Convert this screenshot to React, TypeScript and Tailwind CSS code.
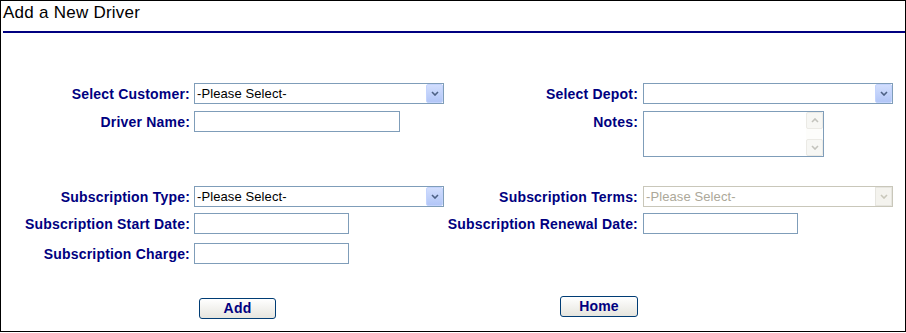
import React from "react";

const label = "h-[21px] pt-[1px] text-right text-[14px] leading-[21px] font-bold tracking-[0.2px] text-[#000080] whitespace-nowrap";

function Chevron({ color, up = false }: { color: string; up?: boolean }) {
  return (
    <svg width="8" height="5" viewBox="0 0 8 5" className={up ? "rotate-180" : ""}>
      <path d="M1 1 L4 4 L7 1" fill="none" stroke={color} strokeWidth="1.6" />
    </svg>
  );
}

function FakeSelect({ value, disabled = false }: { value?: string; disabled?: boolean }) {
  return (
    <div
      className={
        "flex h-[21px] w-[250px] border " +
        (disabled ? "border-[#c9c7ba] bg-white" : "border-[#7f9db9] bg-white")
      }
    >
      <span
        className={
          "flex-1 pl-[2px] text-[13px] leading-[19px] tracking-[0.1px] " + (disabled ? "text-[#aca899]" : "text-black")
        }
      >
        {value}
      </span>
      {disabled ? (
        <div className="flex w-[17px] items-center justify-center border border-[#e6e5df] bg-[#f4f3ee]">
          <Chevron color="#c9c7ba" />
        </div>
      ) : (
        <div className="flex w-[17px] items-center justify-center rounded-[2px] border border-[#c3d3fd] bg-gradient-to-b from-[#d2defd] to-[#b2c6f7]">
          <Chevron color="#4d6185" />
        </div>
      )}
    </div>
  );
}

function TextBox({ width }: { width: string }) {
  return <input type="text" className={"h-[21px] border border-[#7f9db9] bg-white px-[2px] text-[13px] outline-none " + width} />;
}

function Notes() {
  return (
    <div className="flex h-[46px] w-[181px] border border-[#7f9db9] bg-white">
      <textarea className="flex-1 resize-none overflow-hidden px-[2px] text-[13px] outline-none" />
      <div className="flex w-[17px] flex-col bg-[#fdfdfb]">
        <div className="flex h-[17px] items-center justify-center rounded-[2px] border border-[#ebeae5] bg-[#f7f7f4]">
          <Chevron color="#c3c3bd" up />
        </div>
        <div className="flex-1" />
        <div className="flex h-[17px] items-center justify-center rounded-[2px] border border-[#ebeae5] bg-[#f7f7f4]">
          <Chevron color="#c3c3bd" />
        </div>
      </div>
    </div>
  );
}

function Row({ className, children }: { className: string; children: React.ReactNode }) {
  return <div className={"grid grid-cols-[193px_253px_196px_1fr] items-start " + className}>{children}</div>;
}

function XpButton({ children, width }: { children: React.ReactNode; width: string }) {
  return (
    <button
      className={
        "h-[21px] rounded-[3px] border border-[#003c74] bg-gradient-to-b from-white to-[#e6e5de] text-[14px] leading-[19px] font-bold tracking-[0.2px] text-[#000080] " +
        width
      }
    >
      {children}
    </button>
  );
}

export default function App() {
  return (
    <div className="h-[332px] w-[906px] border border-black bg-white font-['Liberation_Sans',Arial,sans-serif]">
      <div className="pl-[2px] pt-[2px] text-[17px] leading-[20px] tracking-[0.25px] text-black">Add a New Driver</div>
      <div className="ml-[2px] mt-[8px] h-[2px] bg-[#000080]" />

      <Row className="mt-[50px]">
        <div className={label + " pr-[4px]"}>Select Customer:</div>
        <FakeSelect value="-Please Select-" />
        <div className={label + " pr-[5px]"}>Select Depot:</div>
        <FakeSelect />
      </Row>

      <Row className="mt-[7px]">
        <div className={label + " pr-[4px]"}>Driver Name:</div>
        <TextBox width="w-[206px]" />
        <div className={label + " pr-[5px]"}>Notes:</div>
        <Notes />
      </Row>

      <Row className="mt-[29px]">
        <div className={label + " pr-[4px]"}>Subscription Type:</div>
        <FakeSelect value="-Please Select-" />
        <div className={label + " pr-[5px]"}>Subscription Terms:</div>
        <FakeSelect value="-Please Select-" disabled />
      </Row>

      <Row className="mt-[6px]">
        <div className={label + " pr-[4px]"}>Subscription Start Date:</div>
        <TextBox width="w-[155px]" />
        <div className={label + " pr-[5px]"}>Subscription Renewal Date:</div>
        <TextBox width="w-[155px]" />
      </Row>

      <Row className="mt-[9px]">
        <div className={label + " pr-[4px]"}>Subscription Charge:</div>
        <TextBox width="w-[155px]" />
        <div />
        <div />
      </Row>

      <Row className="mt-[32px]">
        <div />
        <div className="pl-[5px]">
          <XpButton width="w-[77px]">Add</XpButton>
        </div>
        <div className="flex justify-end pr-[5px]">
          <XpButton width="w-[78px]">Home</XpButton>
        </div>
        <div />
      </Row>
    </div>
  );
}
